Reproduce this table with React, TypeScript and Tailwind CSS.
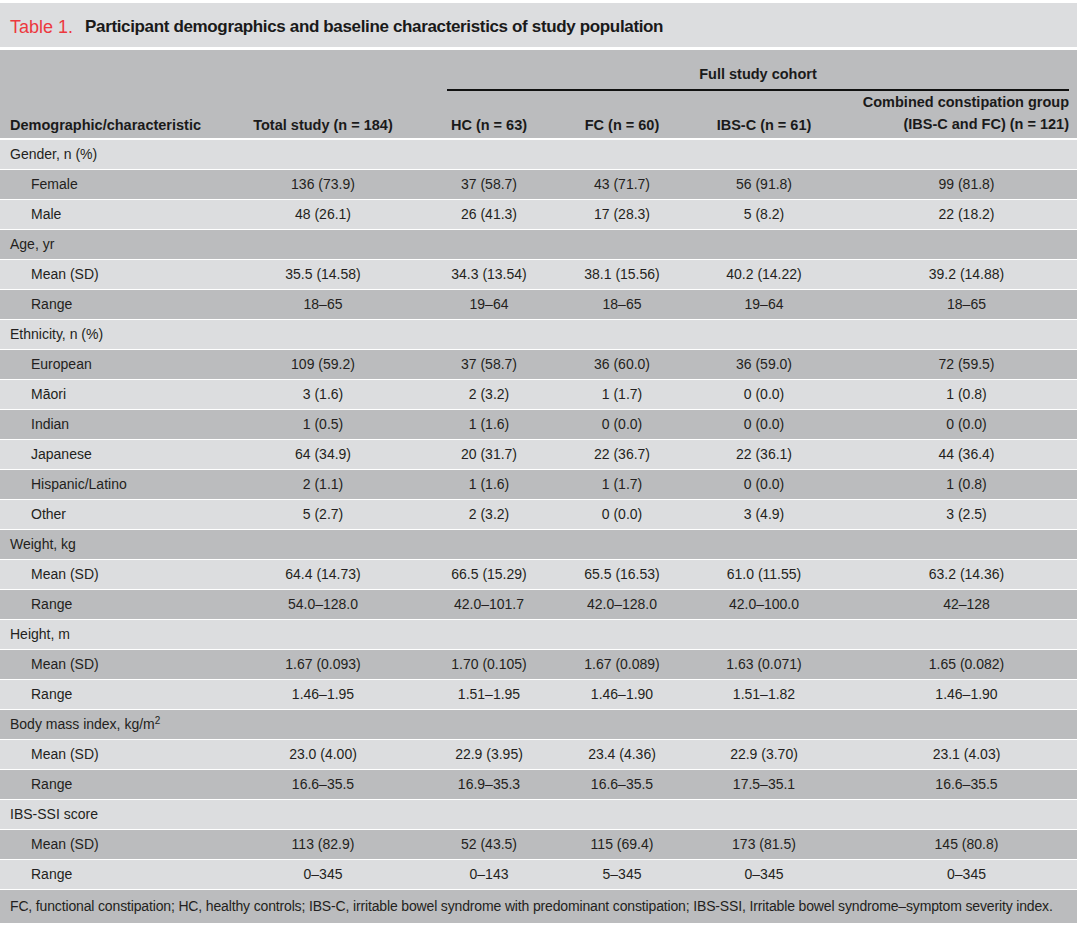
import type { ReactNode } from 'react';

type Section = { label: ReactNode; rows: string[][] };

const SECTIONS: Section[] = [
  {
    label: 'Gender, n (%)',
    rows: [
      ['Female', '136 (73.9)', '37 (58.7)', '43 (71.7)', '56 (91.8)', '99 (81.8)'],
      ['Male', '48 (26.1)', '26 (41.3)', '17 (28.3)', '5 (8.2)', '22 (18.2)'],
    ],
  },
  {
    label: 'Age, yr',
    rows: [
      ['Mean (SD)', '35.5 (14.58)', '34.3 (13.54)', '38.1 (15.56)', '40.2 (14.22)', '39.2 (14.88)'],
      ['Range', '18–65', '19–64', '18–65', '19–64', '18–65'],
    ],
  },
  {
    label: 'Ethnicity, n (%)',
    rows: [
      ['European', '109 (59.2)', '37 (58.7)', '36 (60.0)', '36 (59.0)', '72 (59.5)'],
      ['Māori', '3 (1.6)', '2 (3.2)', '1 (1.7)', '0 (0.0)', '1 (0.8)'],
      ['Indian', '1 (0.5)', '1 (1.6)', '0 (0.0)', '0 (0.0)', '0 (0.0)'],
      ['Japanese', '64 (34.9)', '20 (31.7)', '22 (36.7)', '22 (36.1)', '44 (36.4)'],
      ['Hispanic/Latino', '2 (1.1)', '1 (1.6)', '1 (1.7)', '0 (0.0)', '1 (0.8)'],
      ['Other', '5 (2.7)', '2 (3.2)', '0 (0.0)', '3 (4.9)', '3 (2.5)'],
    ],
  },
  {
    label: 'Weight, kg',
    rows: [
      ['Mean (SD)', '64.4 (14.73)', '66.5 (15.29)', '65.5 (16.53)', '61.0 (11.55)', '63.2 (14.36)'],
      ['Range', '54.0–128.0', '42.0–101.7', '42.0–128.0', '42.0–100.0', '42–128'],
    ],
  },
  {
    label: 'Height, m',
    rows: [
      ['Mean (SD)', '1.67 (0.093)', '1.70 (0.105)', '1.67 (0.089)', '1.63 (0.071)', '1.65 (0.082)'],
      ['Range', '1.46–1.95', '1.51–1.95', '1.46–1.90', '1.51–1.82', '1.46–1.90'],
    ],
  },
  {
    label: (
      <>
        Body mass index, kg/m<sup className="text-[10px]">2</sup>
      </>
    ),
    rows: [
      ['Mean (SD)', '23.0 (4.00)', '22.9 (3.95)', '23.4 (4.36)', '22.9 (3.70)', '23.1 (4.03)'],
      ['Range', '16.6–35.5', '16.9–35.3', '16.6–35.5', '17.5–35.1', '16.6–35.5'],
    ],
  },
  {
    label: 'IBS-SSI score',
    rows: [
      ['Mean (SD)', '113 (82.9)', '52 (43.5)', '115 (69.4)', '173 (81.5)', '145 (80.8)'],
      ['Range', '0–345', '0–143', '5–345', '0–345', '0–345'],
    ],
  },
];

const GRID = 'grid grid-cols-[240px_166px_166px_100px_184px_1fr]';
const LIGHT = 'bg-[#dcdddf]';
const DARK = 'bg-[#bbbcbe]';

export default function App() {
  // flatten into rows so the stripes alternate across section headers too
  const rows: { key: string; head?: ReactNode; cells?: string[] }[] = [];
  SECTIONS.forEach((s, si) => {
    rows.push({ key: `s${si}`, head: s.label });
    s.rows.forEach((r, ri) => rows.push({ key: `s${si}r${ri}`, cells: r }));
  });

  return (
    <div
      className="w-[1077px] bg-white pt-[3px] text-[14px] text-[#231f20]"
      style={{ fontFamily: '"Liberation Sans", Arial, sans-serif' }}
    >
      {/* Title */}
      <div className={`${LIGHT} flex h-[44px] items-center pl-[10px] pt-[4px]`}>
        <span className="text-[18px] text-[#ec383e]">Table 1.</span>
        <span className="ml-[12px] text-[17px] font-bold tracking-[-0.35px] text-[#1a1a1a]">
          Participant demographics and baseline characteristics of study population
        </span>
      </div>

      {/* Column headers */}
      <div className={`${DARK} mt-[3px] h-[88px] text-[14.5px] font-bold text-[#1a1a1a]`}>
        <div className={`${GRID} pt-[14px]`}>
          <div className="col-start-3 col-span-4 ml-[41px] mr-[8px] border-b-2 border-[#111] pb-[5px] text-center leading-[20px]">
            Full study cohort
          </div>
        </div>
        <div className={`${GRID} h-[49px] items-end pb-[5px] leading-[20px]`}>
          <div className="pl-[10px]">Demographic/characteristic</div>
          <div className="text-center">Total study (n = 184)</div>
          <div className="text-center">HC (n = 63)</div>
          <div className="text-center whitespace-nowrap">FC (n = 60)</div>
          <div className="text-center">IBS-C (n = 61)</div>
          <div className="pr-[8px] text-right leading-[22px]">
            Combined constipation group
            <br />
            (IBS-C and FC) (n = 121)
          </div>
        </div>
      </div>

      {/* Body */}
      <div className="mt-[2px] flex flex-col gap-px">
        {rows.map((r, i) => (
          <div key={r.key} className={`${GRID} h-[29px] items-center ${i % 2 === 0 ? LIGHT : DARK}`}>
            {r.head ? (
              <div className="col-span-6 pl-[10px]">{r.head}</div>
            ) : (
              <>
                <div className="pl-[31px]">{r.cells![0]}</div>
                {r.cells!.slice(1).map((c, ci) => (
                  <div key={ci} className="text-center">
                    {c}
                  </div>
                ))}
              </>
            )}
          </div>
        ))}
        <div className={`${DARK} flex h-[33px] items-center whitespace-nowrap pl-[10px] tracking-[-0.15px]`}>
          FC, functional constipation; HC, healthy controls; IBS-C, irritable bowel syndrome with predominant constipation; IBS-SSI, Irritable bowel syndrome–symptom severity index.
        </div>
      </div>
    </div>
  );
}
